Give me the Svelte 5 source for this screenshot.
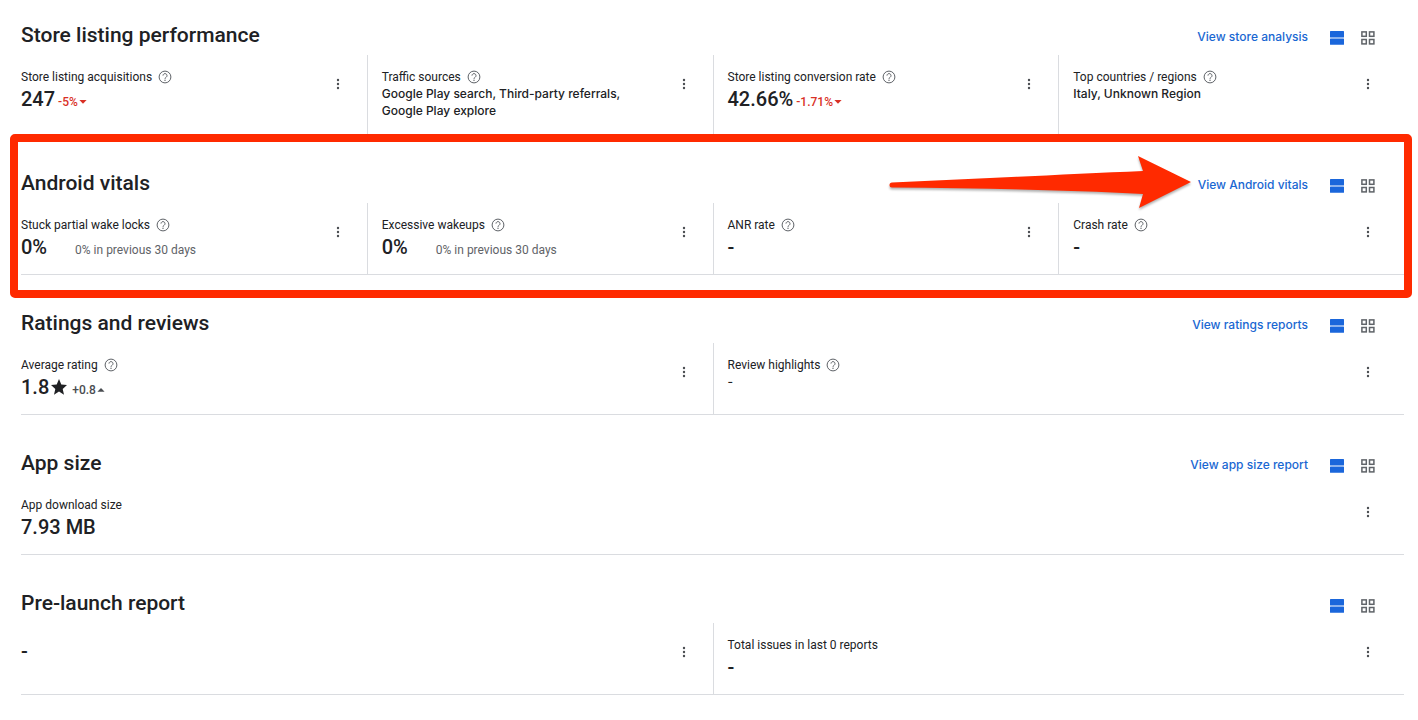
<script>
  const sections = [
    {
      title: 'Store listing performance',
      link: 'View store analysis',
      tall: true,
      cells: [
        { label: 'Store listing acquisitions', help: true, value: '247', delta: '-5%', dir: 'down' },
        {
          label: 'Traffic sources',
          help: true,
          text: 'Google Play search, Third-party referrals, Google Play explore'
        },
        { label: 'Store listing conversion rate', help: true, value: '42.66%', delta: '-1.71%', dir: 'down' },
        { label: 'Top countries / regions', help: true, text: 'Italy, Unknown Region' }
      ]
    },
    {
      title: 'Android vitals',
      link: 'View Android vitals',
      highlighted: true,
      cells: [
        { label: 'Stuck partial wake locks', help: true, value: '0%', previous: '0% in previous 30 days' },
        { label: 'Excessive wakeups', help: true, value: '0%', previous: '0% in previous 30 days' },
        { label: 'ANR rate', help: true, value: '-' },
        { label: 'Crash rate', help: true, value: '-' }
      ]
    },
    {
      title: 'Ratings and reviews',
      link: 'View ratings reports',
      cells: [
        { label: 'Average rating', help: true, value: '1.8', star: true, delta: '+0.8', dir: 'up' },
        { label: 'Review highlights', help: true, text: '-' }
      ]
    },
    {
      title: 'App size',
      link: 'View app size report',
      cells: [{ label: 'App download size', value: '7.93 MB' }]
    },
    {
      title: 'Pre-launch report',
      cells: [{ value: '-' }, { label: 'Total issues in last 0 reports', value: '-' }]
    }
  ];
</script>

<main>
  {#each sections as section}
    <section>
      <header>
        <h2>{section.title}</h2>
        {#if section.link}
          <a href="#top">{section.link}</a>
        {/if}
        <div class="views">
          <button aria-label="List view" aria-pressed="true">
            <svg width="14" height="14" viewBox="0 0 14 14" fill="#1a66db">
              <rect y="0" width="14" height="6.4" rx="0.5" />
              <rect y="7.4" width="14" height="6.4" rx="0.5" />
            </svg>
          </button>
          <button aria-label="Grid view" aria-pressed="false">
            <svg width="14" height="14" viewBox="0 0 14 14" fill="none" stroke="#5f6368" stroke-width="1.5">
              <rect x="0.9" y="0.9" width="4.4" height="4.4" />
              <rect x="8.5" y="0.9" width="4.4" height="4.4" />
              <rect x="0.9" y="8.5" width="4.4" height="4.4" />
              <rect x="8.5" y="8.5" width="4.4" height="4.4" />
            </svg>
          </button>
        </div>
      </header>

      <div class="cells" class:tall={section.tall}>
        {#each section.cells as cell}
          <article>
            <div class="body">
              {#if cell.label}
                <div class="label">
                  <span>{cell.label}</span>
                  {#if cell.help}
                    <svg width="14" height="14" viewBox="0 0 14 14" role="img" aria-label="Help">
                      <circle cx="7" cy="7" r="5.9" fill="none" stroke="#5f6368" stroke-width="1" />
                      <path
                        d="M5 5.6a2 2 0 1 1 3.2 1.6C7.4 7.8 7 8 7 8.8"
                        fill="none"
                        stroke="#5f6368"
                        stroke-width="1"
                      />
                      <rect x="6.4" y="9.7" width="1.2" height="1.2" fill="#5f6368" />
                    </svg>
                  {/if}
                </div>
              {/if}
              {#if cell.text}
                <p class="text">{cell.text}</p>
              {/if}
              {#if cell.value}
                <div class="figure">
                  <strong>{cell.value}</strong>
                  {#if cell.star}
                    <svg class="star" width="16" height="16" viewBox="0 0 16 16" fill="#202124" aria-hidden="true">
                      <path d="M8 0l2.3 5.5 5.7.5-4.3 3.9 1.3 5.8L8 12.6l-5 3.1 1.3-5.8L0 6l5.7-.5z" />
                    </svg>
                  {/if}
                  {#if cell.delta}
                    <span class="delta {cell.dir}">
                      {cell.delta}<svg width="8" height="4" viewBox="0 0 8 4" fill="currentColor" aria-hidden="true">
                        <path d={cell.dir === 'down' ? 'M0.4 0h7.2L4 3.8z' : 'M0.4 3.8h7.2L4 0z'} />
                      </svg>
                    </span>
                  {/if}
                  {#if cell.previous}
                    <span class="previous">{cell.previous}</span>
                  {/if}
                </div>
              {/if}
            </div>
            <button aria-label="More options">
              <svg width="4" height="12" viewBox="0 0 4 12" fill="#4a4d51">
                <circle cx="2" cy="2" r="1.2" />
                <circle cx="2" cy="6" r="1.2" />
                <circle cx="2" cy="10" r="1.2" />
              </svg>
            </button>
          </article>
        {/each}
      </div>

      {#if section.highlighted}
        <div class="outline"></div>
        <svg class="arrow" width="304" height="58" viewBox="0 0 304 58" aria-hidden="true">
          <path
            d="M3 27.5 C90 24 180 19 254 16 L249 1 L302 27 L250 53 L254 39 C180 35 90 33 3 32.5 A2.5 2.5 0 0 1 3 27.5z"
            fill="#ff2a00"
          />
        </svg>
      {/if}
    </section>
  {/each}
</main>

<style>
  :global(body) {
    margin: 0;
    background: #fff;
  }

  main {
    padding: 0 14px 0 21px;
    overflow: hidden;
    color: #202124;
    font-family: Roboto, 'Liberation Sans', sans-serif;
    font-size: 12px;
    line-height: 17px;
  }

  section {
    position: relative;
  }

  header {
    display: flex;
    align-items: flex-end;
    height: 68px;
    padding: 0 24px 5px 0;
    box-sizing: border-box;
  }

  section:first-child header {
    height: 55px;
  }

  h2 {
    flex: 1;
    margin: 0 0 2px;
    font-size: 21px;
    font-weight: 500;
    line-height: 26px;
  }

  a {
    margin: 0 17px 5px 0;
    color: #1967d2;
    font: 500 12px/17px Inter, sans-serif;
    text-decoration: none;
  }

  button {
    display: flex;
    align-items: center;
    justify-content: center;
    flex: none;
    width: 24px;
    height: 24px;
    padding: 0;
    border: 0;
    background: none;
    cursor: pointer;
  }

  .views {
    display: flex;
    gap: 7px;
  }

  .cells {
    display: grid;
    grid-auto-flow: column;
    grid-auto-columns: minmax(0, 1fr);
    min-height: 72px;
    box-sizing: border-box;
    border-bottom: 1px solid #dadce0;
  }

  .cells.tall {
    min-height: 80px;
  }

  article {
    display: flex;
    align-items: flex-start;
    justify-content: space-between;
    padding: 13px 17px 0 14px;
    border-left: 1px solid #dadce0;
  }

  article:first-child {
    padding-left: 0;
    border-left: 0;
  }

  article:last-child {
    padding-right: 24px;
  }

  article > button {
    margin-top: 4px;
  }

  .body {
    flex: 0 1 250px;
    padding-top: 1px;
  }

  .label {
    display: flex;
    align-items: center;
    gap: 6px;
    height: 16px;
  }

  .label svg {
    margin-bottom: 1px;
  }

  .text {
    margin: 0;
    font: 500 12px/17px Inter, sans-serif;
  }

  .figure {
    display: flex;
    align-items: baseline;
    line-height: 28px;
  }

  .figure strong {
    font-size: 20px;
    font-weight: 500;
    line-height: 28px;
  }

  .star {
    align-self: center;
    margin: 0 5px 4px 2px;
  }

  .delta {
    display: flex;
    align-items: center;
    gap: 1px;
    margin-left: 3px;
    font-weight: 500;
  }

  .star + .delta {
    margin-left: 0;
  }

  .down {
    color: #d93025;
  }

  .up {
    color: #4a4d51;
  }

  .previous {
    margin-left: 28px;
    color: #5f6368;
  }

  .outline {
    position: absolute;
    inset: -1px -8px -23px -11px;
    border: 8px solid #ff2a00;
    border-radius: 5px;
    pointer-events: none;
  }

  .arrow {
    position: absolute;
    top: 20px;
    right: 211px;
    filter: drop-shadow(0 2px 1px rgb(0 0 0 / 0.3));
    pointer-events: none;
  }
</style>
